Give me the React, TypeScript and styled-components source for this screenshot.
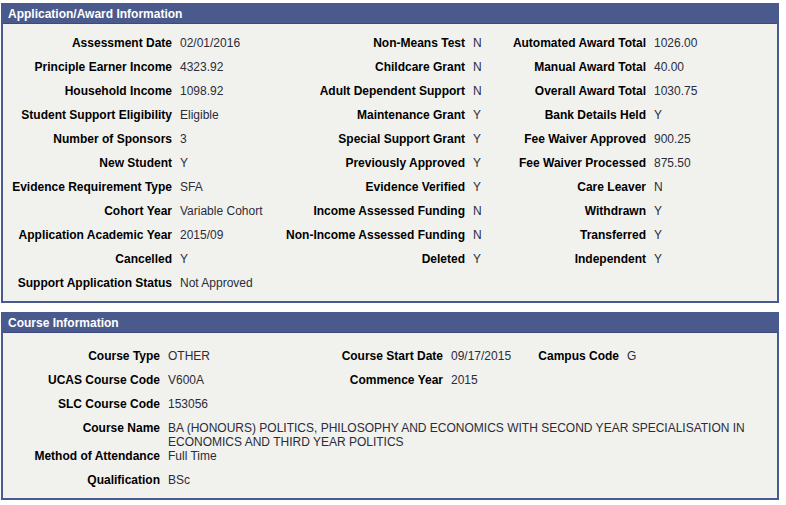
import React from "react";
import styled, { createGlobalStyle } from "styled-components";

const GlobalStyle = createGlobalStyle`
  html, body {
    margin: 0;
    padding: 0;
    background: #ffffff;
    font-family: Arial, "Liberation Sans", sans-serif;
  }
`;

const Page = styled.div`
  display: flex;
  flex-direction: column;
  gap: 9px;
  width: 778px;
  padding: 3px 0 0 1px;
`;

const Panel = styled.section`
  border: 2px solid #4a5a8e;
  background: #f1f2ee;
`;

const PanelHeader = styled.h2`
  margin: 0;
  height: 19px;
  box-sizing: border-box;
  padding: 0 0 0 5px;
  background: #4b5a8c;
  border-bottom: 1px solid #3c4a7c;
  color: #ffffff;
  font-size: 12px;
  font-weight: bold;
  line-height: 19px;
  white-space: nowrap;
`;

const Grid = styled.div<{ $cols: string; $top: number }>`
  display: grid;
  grid-template-columns: ${(p) => p.$cols};
  column-gap: 8px;
  padding: ${(p) => p.$top}px 0 6px 0;
`;

const Label = styled.span<{ $tall?: boolean }>`
  box-sizing: border-box;
  height: ${(p) => (p.$tall ? 28 : 24)}px;
  padding-top: 5px;
  font-size: 12px;
  line-height: 14px;
  font-weight: bold;
  color: #000000;
  text-align: right;
  white-space: nowrap;
`;

const Value = styled.span<{ $tall?: boolean; $span?: boolean }>`
  box-sizing: border-box;
  height: ${(p) => (p.$tall ? 28 : 24)}px;
  padding-top: 5px;
  font-size: 12px;
  line-height: 14px;
  color: #2b2b3a;
  white-space: ${(p) => (p.$span ? "normal" : "nowrap")};
  grid-column: ${(p) => (p.$span ? "2 / -1" : "auto")};
  padding-right: ${(p) => (p.$span ? "20px" : "0")};
`;

const Empty = styled.span``;

type Pair = [string, string] | null;

const awardRows: Pair[][] = [
  [["Assessment Date", "02/01/2016"], ["Non-Means Test", "N"], ["Automated Award Total", "1026.00"]],
  [["Principle Earner Income", "4323.92"], ["Childcare Grant", "N"], ["Manual Award Total", "40.00"]],
  [["Household Income", "1098.92"], ["Adult Dependent Support", "N"], ["Overall Award Total", "1030.75"]],
  [["Student Support Eligibility", "Eligible"], ["Maintenance Grant", "Y"], ["Bank Details Held", "Y"]],
  [["Number of Sponsors", "3"], ["Special Support Grant", "Y"], ["Fee Waiver Approved", "900.25"]],
  [["New Student", "Y"], ["Previously Approved", "Y"], ["Fee Waiver Processed", "875.50"]],
  [["Evidence Requirement Type", "SFA"], ["Evidence Verified", "Y"], ["Care Leaver", "N"]],
  [["Cohort Year", "Variable Cohort"], ["Income Assessed Funding", "N"], ["Withdrawn", "Y"]],
  [["Application Academic Year", "2015/09"], ["Non-Income Assessed Funding", "N"], ["Transferred", "Y"]],
  [["Cancelled", "Y"], ["Deleted", "Y"], ["Independent", "Y"]],
  [["Support Application Status", "Not Approved"], null, null],
];

const courseRows: Pair[][] = [
  [["Course Type", "OTHER"], ["Course Start Date", "09/17/2015"], ["Campus Code", "G"]],
  [["UCAS Course Code", "V600A"], ["Commence Year", "2015"], null],
  [["SLC Course Code", "153056"], null, null],
];

const courseTail: [string, string][] = [
  ["Method of Attendance", "Full Time"],
  ["Qualification", "BSc"],
];

function renderRows(rows: Pair[][], prefix: string) {
  return rows.flatMap((row, r) =>
    row.flatMap((cell, c) =>
      cell
        ? [
            <Label key={`${prefix}-${r}-${c}-l`}>{cell[0]}</Label>,
            <Value key={`${prefix}-${r}-${c}-v`}>{cell[1]}</Value>,
          ]
        : [<Empty key={`${prefix}-${r}-${c}-l`} />, <Empty key={`${prefix}-${r}-${c}-v`} />]
    )
  );
}

export default function App() {
  return (
    <>
      <GlobalStyle />
      <Page>
        <Panel>
          <PanelHeader>Application/Award Information</PanelHeader>
          <Grid $cols="169px 98px 179px 27px 138px 1fr" $top={7}>
            {renderRows(awardRows, "a")}
          </Grid>
        </Panel>
        <Panel>
          <PanelHeader>Course Information</PanelHeader>
          <Grid $cols="157px 152px 115px 73px 87px 1fr" $top={11}>
            {renderRows(courseRows, "c")}
            <Label $tall>Course Name</Label>
            <Value $tall $span>
              BA (HONOURS) POLITICS, PHILOSOPHY AND ECONOMICS WITH SECOND YEAR SPECIALISATION IN
              ECONOMICS AND THIRD YEAR POLITICS
            </Value>
            {courseTail.flatMap(([l, v]) => [
              <Label key={`${l}-l`}>{l}</Label>,
              <Value key={`${l}-v`}>{v}</Value>,
              <Empty key={`${l}-e1`} />,
              <Empty key={`${l}-e2`} />,
              <Empty key={`${l}-e3`} />,
              <Empty key={`${l}-e4`} />,
            ])}
          </Grid>
        </Panel>
      </Page>
    </>
  );
}
